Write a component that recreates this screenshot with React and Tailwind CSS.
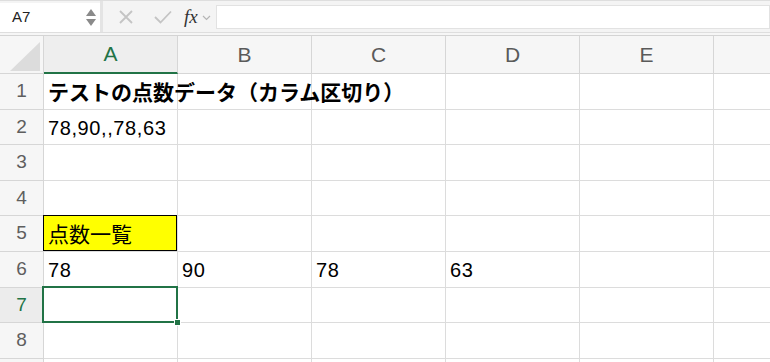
import React from "react";

const COLS = ["A", "B", "C", "D", "E"];
const ROW_H = ["h-[36px]", "h-[35px]", "h-[36px]", "h-[35px]", "h-[36px]", "h-[36px]", "h-[35px]", "h-[36px]", "h-[20px]"];

const cellFont = { fontFamily: '"Liberation Sans", "Noto Sans CJK JP", sans-serif' };
const jpFont = { fontFamily: '"Noto Sans CJK JP", sans-serif' };

function Cell({ r, c }) {
  let content = null;
  let extra = "";
  let overlay = null;
  if (r === 1 && c === 0) {
    content = (
      <span className="absolute left-[4px] top-0 bottom-0 flex items-center whitespace-nowrap text-[21px] font-bold text-black z-10" style={jpFont}>
        テストの点数データ（カラム区切り）
      </span>
    );
  }
  if (r === 2 && c === 0) {
    content = (
      <span className="absolute left-[4px] top-0 bottom-0 flex items-center whitespace-nowrap text-[20px] tracking-[0.6px] text-black pt-[1px]" style={cellFont}>
        78,90,,78,63
      </span>
    );
  }
  if (r === 5 && c === 0) {
    extra = "bg-[#ffff00]";
    content = (
      <span className="absolute left-[4px] top-0 bottom-0 flex items-center whitespace-nowrap text-[21px] text-black" style={jpFont}>
        点数一覧
      </span>
    );
    overlay = <div className="absolute -top-px -left-px right-0 bottom-0 border border-black pointer-events-none" />;
  }
  if (r === 6 && c < 4) {
    const v = ["78", "90", "78", "63"][c];
    content = (
      <span className="absolute left-[4px] top-0 bottom-0 flex items-center whitespace-nowrap text-[20px] tracking-[0.6px] text-black pt-[1px]" style={cellFont}>
        {v}
      </span>
    );
  }
  if (r === 7 && c === 0) {
    overlay = (
      <>
        <div className="absolute -top-[2px] -left-[2px] -right-[1px] -bottom-[1px] border-2 border-[#217346] z-20 pointer-events-none" />
        <div className="absolute -right-[4px] -bottom-[4px] w-[7px] h-[7px] bg-[#217346] border border-white z-30" />
      </>
    );
  }
  return (
    <div className={`relative border-r border-b border-[#dcdcdc] ${extra}`}>
      {content}
      {overlay}
    </div>
  );
}

export default function App() {
  return (
    <div className="w-[770px] h-[362px] overflow-hidden bg-white select-none" style={cellFont}>
      {/* formula bar */}
      <div className="h-[33px] bg-[#f4f4f4] border-t border-[#dedede] border-b border-[#c9c9c9] flex items-start">
        <div className="w-[100px] h-[29px] mt-[2px] bg-white flex items-center justify-between pl-[12px] pr-[4px]">
          <span className="text-[15px] text-[#222]">A7</span>
          <div className="flex flex-col gap-[3px] items-center">
            <svg width="10" height="7" viewBox="0 0 10 7"><path d="M5 0 L10 7 L0 7 Z" fill="#8a8a8a" /></svg>
            <svg width="10" height="7" viewBox="0 0 10 7"><path d="M0 0 L10 0 L5 7 Z" fill="#8a8a8a" /></svg>
          </div>
        </div>
        <div className="w-[3px] self-stretch bg-[#e4e4e4]" />
        <div className="flex items-center h-[31px] pl-[15px]">
          <svg width="16" height="16" viewBox="0 0 16 16" className="mr-[20px]">
            <path d="M2 2 L14 14 M14 2 L2 14" stroke="#c4c4c4" strokeWidth="1.8" />
          </svg>
          <svg width="18" height="14" viewBox="0 0 18 14" className="mr-[12px]">
            <path d="M1 7 L6.5 12.5 L17 1.5" stroke="#c4c4c4" strokeWidth="1.8" fill="none" />
          </svg>
          <span className="text-[19px] italic text-[#333] leading-none" style={{ fontFamily: '"Liberation Serif", serif' }}>fx</span>
          <svg width="9" height="6" viewBox="0 0 9 6" className="ml-[4px] mt-[3px]">
            <path d="M1 1 L4.5 4.5 L8 1" stroke="#b5b5b5" strokeWidth="1.2" fill="none" />
          </svg>
        </div>
        <div className="flex-1 h-[24px] mt-[4px] ml-[5px] bg-white border border-[#e2e2e2]" />
      </div>
      <div className="h-[2px] bg-[#f6f6f6]" />
      {/* grid */}
      <div className="grid grid-cols-[44px_134px_134px_134px_134px_134px_1fr] border-t border-[#d4d4d4]">
        {/* header row */}
        <div className="relative h-[38px] bg-[#f6f6f6] border-r border-b border-[#d6d6d6]">
          <svg className="absolute left-[10px] top-[6px]" width="30" height="29" viewBox="0 0 30 29">
            <path d="M30 0 L30 29 L0 29 Z" fill="#dcdcdc" />
          </svg>
        </div>
        {COLS.map((c, i) => (
          <div
            key={c}
            className={`h-[38px] flex items-center justify-center text-[21px] border-r ${
              i === 0
                ? "bg-[#eeeeee] text-[#217346] border-b-2 border-b-[#217346] border-r-[#d6d6d6]"
                : "bg-[#f6f6f6] text-[#5a5a5a] border-b border-[#d6d6d6]"
            }`}
          >
            {c}
          </div>
        ))}
        <div className="h-[38px] bg-[#f6f6f6] border-b border-[#d6d6d6]" />
        {/* body rows */}
        {ROW_H.map((h, idx) => {
          const r = idx + 1;
          const sel = r === 7;
          return (
            <React.Fragment key={r}>
              <div
                className={`${h} flex items-center justify-center text-[19px] border-r border-b border-[#d6d6d6] ${
                  sel ? "bg-[#ececec] text-[#217346]" : "bg-[#f6f6f6] text-[#5e5e5e]"
                }`}
              >
                {r <= 8 ? r : null}
              </div>
              {COLS.map((c, ci) => (
                <Cell key={c} r={r} c={ci} />
              ))}
              <div className="border-b border-[#dcdcdc]" />
            </React.Fragment>
          );
        })}
      </div>
    </div>
  );
}
